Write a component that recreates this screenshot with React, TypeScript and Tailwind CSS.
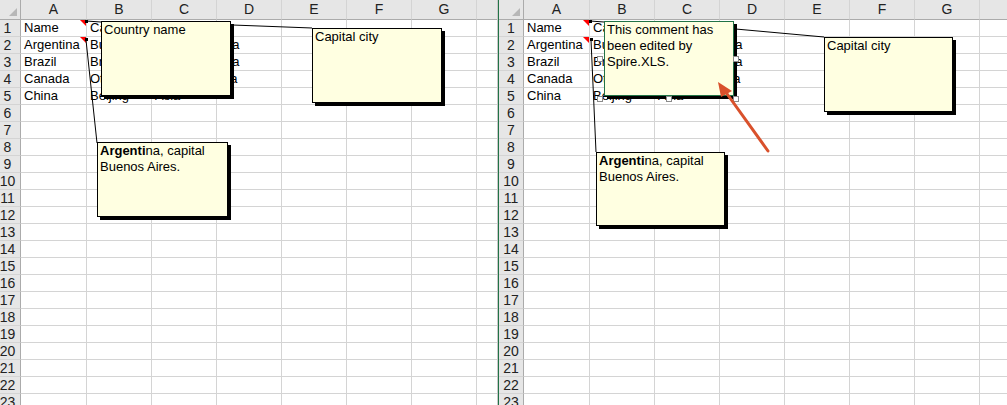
import React from 'react';

const COLS = ['A', 'B', 'C', 'D', 'E', 'F', 'G', 'H'];
const ROWS = Array.from({ length: 23 }, (_, i) => i + 1);

const CELLS: Record<string, string> = {
    A1: 'Name', B1: 'Capital', C1: 'Continent',
    A2: 'Argentina', B2: 'Buenos Aires', C2: 'South America',
    A3: 'Brazil', B3: 'Brasilia', C3: 'South America',
    A4: 'Canada', B4: 'Ottawa', C4: 'North America',
    A5: 'China', B5: 'Beijing', C5: 'Asia',
};

// cells that carry a comment (red corner marker)
const MARKED = ['A1', 'A2'];

const RedMark = () => (
    <svg className="absolute right-0 top-0" width="6" height="6" viewBox="0 0 6 6">
        <polygon points="0,0 6,0 6,6" fill="#ff0000" />
    </svg>
);

interface SheetProps {
    headerCols: string;
}

const Sheet: React.FC<SheetProps> = ({ headerCols }) => {
    return (
        <div className={`grid ${headerCols} grid-rows-[20px_repeat(23,17px)]`}>
            <div className="relative bg-[#e6e6e6] border-r border-b border-r-[#ababab] border-b-[#ababab]">
                <svg className="absolute right-[3px] bottom-[3px]" width="8" height="8" viewBox="0 0 8 8">
                    <polygon points="8,0 8,8 0,8" fill="#b7b7b7" />
                </svg>
            </div>
            {COLS.map(c => (
                <div key={c} className="bg-[#e6e6e6] border-r border-b border-r-[#d4d4d4] border-b-[#ababab] flex items-center justify-center text-[14px] text-[#222]">
                    {c}
                </div>
            ))}
            {ROWS.map(r => (
                <React.Fragment key={r}>
                    <div className="bg-[#e6e6e6] border-r border-b border-r-[#ababab] border-b-[#d4d4d4] flex items-center justify-center text-[14px] leading-[16px] text-[#222]">
                        {r}
                    </div>
                    {COLS.map(c => {
                        const id = `${c}${r}`;
                        return (
                            <div key={id} className="relative border-r border-b border-[#d4d4d4] bg-white">
                                {CELLS[id] && (
                                    <span className="absolute left-[3px] top-0 whitespace-nowrap text-[13px] leading-[16px] text-black z-[1]">
                                        {CELLS[id]}
                                    </span>
                                )}
                                {MARKED.includes(id) && <RedMark />}
                            </div>
                        );
                    })}
                </React.Fragment>
            ))}
        </div>
    );
};

const Handle: React.FC<{ className: string }> = ({ className }) => (
    <div className={`absolute w-[6px] h-[6px] bg-white border border-[#8c8c8c] z-20 ${className}`} />
);

const noteBase = 'absolute z-20 bg-[#ffffe1] border shadow-[3px_3px_0_#000] px-[2px] text-[13px] leading-[16px] text-black';

export default function App() {
    return (
        <div className="flex h-[405px] w-[1007px] overflow-hidden bg-white font-['Liberation_Sans',Arial,sans-serif]">
            {/* left sheet */}
            <div className="relative w-[497px] shrink-0 overflow-hidden">
                <div className="-ml-[5px] w-[573px]">
                    <Sheet headerCols="grid-cols-[26px_66px_65px_65px_65px_65px_65px_65px_65px]" />
                </div>
                <svg className="absolute left-0 top-0 z-10" width="497" height="405">
                    <line x1="86" y1="21" x2="101" y2="22" stroke="#000" strokeWidth="1" />
                    <line x1="153" y1="22" x2="312" y2="28" stroke="#000" strokeWidth="1" />
                    <line x1="86" y1="40" x2="97" y2="143" stroke="#000" strokeWidth="1" />
                    <rect x="85" y="20" width="3" height="3" fill="#000" />
                    <rect x="152" y="21" width="3" height="3" fill="#000" />
                    <rect x="85" y="38" width="3" height="3" fill="#000" />
                </svg>
                <div className={`${noteBase} border-black left-[101px] top-[21px] w-[130px] h-[75px]`}>
                    Country name
                </div>
                <div className={`${noteBase} border-black left-[312px] top-[28px] w-[130px] h-[75px]`}>
                    Capital city
                </div>
                <div className={`${noteBase} border-black left-[97px] top-[142px] w-[131px] h-[75px]`}>
                    <b>Argenti</b>na, capital<br />Buenos Aires.
                </div>
            </div>

            {/* divider */}
            <div className="w-px shrink-0 bg-[#c8c8c8]" />
            <div className="w-px shrink-0 bg-[#217346]" />

            {/* right sheet */}
            <div className="relative w-[508px] shrink-0 overflow-hidden">
                <div className="w-[546px]">
                    <Sheet headerCols="grid-cols-[25px_66px_65px_65px_65px_65px_65px_65px_65px]" />
                </div>
                <svg className="absolute left-0 top-0 z-10" width="508" height="405">
                    <line x1="91" y1="21" x2="105" y2="22" stroke="#000" strokeWidth="1" />
                    <line x1="159" y1="22" x2="325" y2="37" stroke="#000" strokeWidth="1" />
                    <line x1="92" y1="40" x2="97" y2="152" stroke="#000" strokeWidth="1" />
                    <rect x="90" y="20" width="3" height="3" fill="#000" />
                    <rect x="158" y="21" width="3" height="3" fill="#000" />
                    <rect x="91" y="38" width="3" height="3" fill="#000" />
                </svg>
                <div className={`${noteBase} border-[#217346] leading-[16.5px] left-[105px] top-[21px] w-[130px] h-[75px]`}>
                    This comment has<br />been edited by<br />Spire.XLS.
                </div>
                <Handle className="left-[98px] top-[56px]" />
                <Handle className="left-[234px] top-[56px]" />
                <Handle className="left-[98px] top-[96px]" />
                <Handle className="left-[167px] top-[96px]" />
                <Handle className="left-[234px] top-[96px]" />
                <div className={`${noteBase} border-black left-[325px] top-[37px] w-[129px] h-[75px]`}>
                    Capital city
                </div>
                <div className={`${noteBase} border-black left-[97px] top-[152px] w-[129px] h-[74px]`}>
                    <b>Argenti</b>na, capital<br />Buenos Aires.
                </div>
                <svg className="absolute left-0 top-0 z-30 pointer-events-none" width="508" height="405">
                    <line x1="269" y1="151" x2="226" y2="91" stroke="#d9512c" strokeWidth="3" strokeLinecap="round" />
                    <polygon points="219,82 233,91 222,97" fill="#d9512c" />
                </svg>
            </div>
        </div>
    );
}
